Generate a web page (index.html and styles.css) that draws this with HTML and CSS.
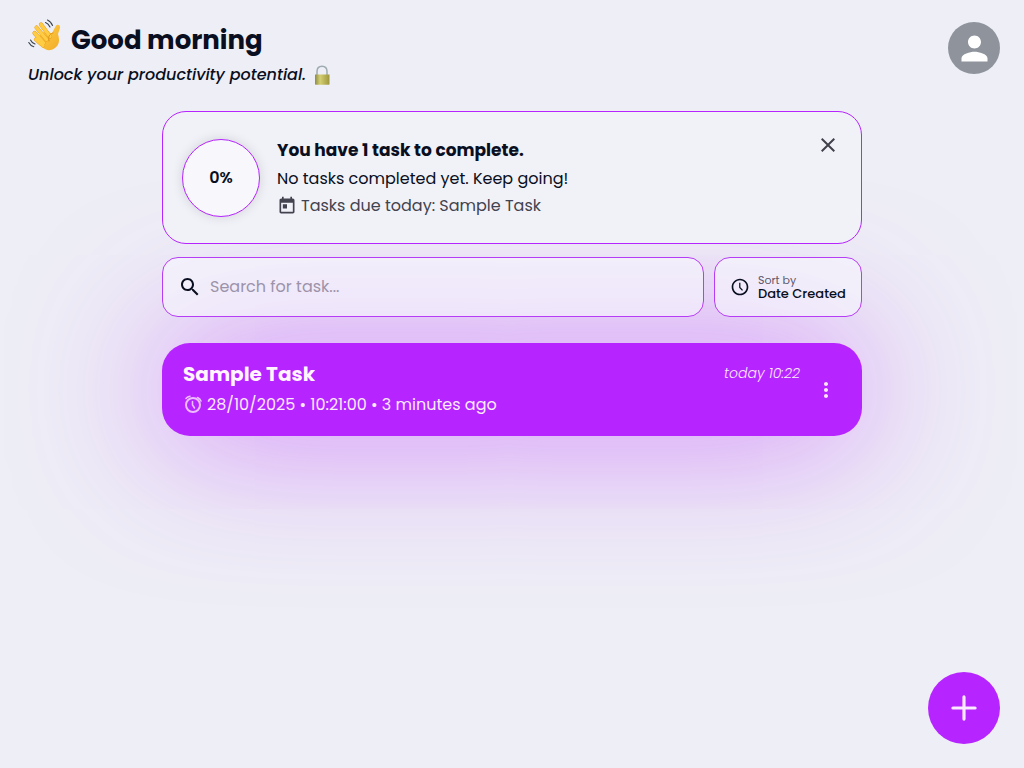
FILE: index.html
```html
<!DOCTYPE html>
<html lang="en">
<head>
<meta charset="utf-8">
<meta name="viewport" content="width=device-width, initial-scale=1">
<title>Todo App</title>
<link rel="stylesheet" href="styles.css">
</head>
<body>
<header class="header">
  <div>
    <h1 class="greeting">
      <svg class="wave" viewBox="0 0 34 34" aria-hidden="true">
        <defs><linearGradient id="skin" x1="0" y1="0" x2="1" y2="1"><stop offset="0" stop-color="#ffd04a"/><stop offset="1" stop-color="#f3ac26"/></linearGradient></defs>
        <path d="M13 14l11 1 3.500-6.500c1.500-3 5-1.500 4.500 1.500l-2 6c2 7 1 11-3 14-5 3.500-9 2.500-13-1l-5-4z" fill="url(#skin)"/>
        <g stroke-linecap="round" fill="none">
          <path d="M13 6.500l9 12M8.500 9.500l10 12M6.500 15l9 10M8 21.500l7 6" stroke="#e79d1c" stroke-width="4.200"/>
          <path d="M13 6.500l9 12M8.500 9.500l10 12M6.500 15l9 10M8 21.500l7 6" stroke="#ffcc43" stroke-width="3.400"/>
          <path d="M25 15c-4 1-5 4-4 8" stroke="#df941b" stroke-width="1"/>
          <path d="M17.500 4.500c2 .8 3.500 2.500 4.500 4.500M19.500 2c2.500 1 4 3 5 5.500M2.500 22c.8 1.800 2.300 3.200 4.500 4M.8 24.500c1 2 2.500 3.500 5 4.200" stroke="#39424b" stroke-width="1.100"/>
        </g>
      </svg>
      <span>Good morning</span>
    </h1>
    <p class="tagline">
      <span>Unlock your productivity potential.</span>
      <svg class="lock" viewBox="0 0 18 20" aria-hidden="true">
        <defs><linearGradient id="brass" x1="0" x2="1"><stop offset="0" stop-color="#8e8b45"/><stop offset=".35" stop-color="#d3cf72"/><stop offset="1" stop-color="#9e963d"/></linearGradient></defs>
        <path d="M4 10V6.500C4 3 6 1.200 9 1.200s5 1.800 5 5.300V10" fill="none" stroke="#9daab0" stroke-width="1.500"/>
        <path d="M2 9.500h14.500V19q0 .8-.8.8H2.800Q2 19.800 2 19z" fill="url(#brass)"/>
      </svg>
    </p>
  </div>
  <button class="avatar" aria-label="Profile">
    <svg viewBox="0 0 24 24"><path d="M12 12c2.210 0 4-1.790 4-4s-1.790-4-4-4-4 1.790-4 4 1.790 4 4 4zm0 2c-2.670 0-8 1.340-8 4v2h16v-2c0-2.660-5.330-4-8-4z"/></svg>
  </button>
</header>

<main class="content">
  <section class="summary">
    <div class="progress">0%</div>
    <div class="summary-text">
      <h2 class="summary-title">You have 1 task to complete.</h2>
      <p class="summary-line">No tasks completed yet. Keep going!</p>
      <p class="due">
        <svg class="icon-20" viewBox="0 0 24 24" aria-hidden="true"><path d="M19 3h-1V1h-2v2H8V1H6v2H5c-1.110 0-1.990.9-1.990 2L3 19c0 1.100.89 2 2 2h14c1.100 0 2-.9 2-2V5c0-1.100-.9-2-2-2zm0 16H5V8h14v11zM7 10h5v5H7z"/></svg>
        <span>Tasks due today: Sample Task</span>
      </p>
    </div>
    <button class="close" aria-label="Close">
      <svg viewBox="0 0 24 24"><path d="M19 6.410 17.590 5 12 10.590 6.410 5 5 6.410 10.590 12 5 17.590 6.410 19 12 13.410 17.590 19 19 17.590 13.410 12z"/></svg>
    </button>
  </section>

  <div class="filters">
    <div class="search">
      <svg class="icon-24" viewBox="0 0 24 24" aria-hidden="true"><path d="M15.500 14h-.79l-.28-.27C15.410 12.590 16 11.110 16 9.500 16 5.910 13.090 3 9.500 3S3 5.910 3 9.500 5.910 16 9.500 16c1.610 0 3.090-.59 4.230-1.570l.27.28v.79l5 4.990L20.490 19l-4.990-5zm-6 0C7.010 14 5 11.990 5 9.500S7.010 5 9.500 5 14 7.010 14 9.500 11.990 14 9.500 14z"/></svg>
      <input class="search-input" type="text" aria-label="Search" placeholder="Search for task...">
    </div>
    <div class="sort">
      <svg class="icon-20" viewBox="0 0 24 24" aria-hidden="true"><path d="M11.990 2C6.470 2 2 6.480 2 12s4.470 10 9.990 10C17.520 22 22 17.520 22 12S17.520 2 11.990 2zM12 20c-4.420 0-8-3.580-8-8s3.580-8 8-8 8 3.580 8 8-3.580 8-8 8zm.5-13H11v6l3.500 3.500 1.100-1-3.100-3.200z"/></svg>
      <div class="sort-field">
        <label class="sort-label" for="sort">Sort by</label>
        <select class="sort-select" id="sort"><option>Date Created</option></select>
      </div>
    </div>
  </div>

  <article class="task">
    <div class="task-body">
      <div class="task-head">
        <h3 class="task-name">Sample Task</h3>
        <time class="task-time">today 10:22</time>
      </div>
      <p class="deadline">
        <svg class="icon-20 alarm" viewBox="0 0 20 20" aria-hidden="true"><g fill="none" stroke="currentColor" stroke-width="2" stroke-linecap="round"><circle cx="10" cy="10" r="7"/><path d="M9.500 6.500V10l2 3" stroke-width="1.600"/><path d="M3 3.500Q4.500 1.500 7 1.200M14.500 2.500Q17 3.500 18 6" stroke-width="1.600"/></g></svg>
        <span>28/10/2025 • 10:21:00 • 3 minutes ago</span>
      </p>
    </div>
    <button class="more" aria-label="Task menu">
      <svg viewBox="0 0 24 24"><path d="M12 8c1.100 0 2-.9 2-2s-.9-2-2-2-2 .9-2 2 .9 2 2 2zm0 2c-1.100 0-2 .9-2 2s.9 2 2 2 2-.9 2-2-.9-2-2-2zm0 6c-1.100 0-2 .9-2 2s.9 2 2 2 2-.9 2-2-.9-2-2-2z"/></svg>
    </button>
  </article>
</main>

<button class="add" aria-label="Add task">
  <svg viewBox="0 0 24 24"><path d="M5 12h14M12 5v14"/></svg>
</button>
</body>
</html>
```
FILE: styles.css
```css
* { box-sizing: border-box; }

body {
  margin: 0;
  min-height: 100vh;
  overflow-x: hidden;
  background: #eeeef6;
  color: #090f20;
  font-family: Poppins, Inter, "Noto Sans", sans-serif;
  font-size: 16px;
  line-height: 24px;
}

h1, h2, h3, p { margin: 0; }
button { padding: 0; border: 0; background: none; cursor: pointer; }
svg { display: block; fill: currentColor; flex: none; }
.icon-20 { width: 20px; height: 20px; }
.icon-24 { width: 24px; height: 24px; }

.header {
  display: flex;
  justify-content: space-between;
  align-items: flex-start;
  padding: 18px 24px 0 28px;
}

.greeting {
  display: flex;
  gap: 9px;
  font-size: 26px;
  line-height: 45px;
  font-weight: 700;
}
.wave { width: 34px; height: 34px; }

.tagline {
  display: flex;
  align-items: center;
  gap: 7px;
  font-style: italic;
  font-weight: 500;
}
.lock { width: 18px; height: 20px; }

.avatar {
  display: grid;
  place-items: center;
  width: 52px;
  height: 52px;
  margin-top: 4px;
  border-radius: 50%;
  background: #8e939c;
  color: #fff;
}
.avatar svg { width: 39px; height: 39px; }

.content {
  width: 100%;
  max-width: 732px;
  margin: 0 auto;
  padding: 24px 16px;
}

.summary, .filters { position: relative; z-index: 1; }

.summary {
  display: flex;
  align-items: center;
  gap: 17px;
  padding: 24px 19px;
  border: 1px solid #b624ff;
  border-radius: 24px;
  background: #f1f1f8;
}
.progress {
  display: grid;
  place-items: center;
  flex: none;
  width: 78px;
  height: 78px;
  border: 1px solid #b624ff;
  border-radius: 50%;
  background: #f7f7fc;
  box-shadow: 0 0 12px rgba(0, 0, 0, .13);
  font-weight: 600;
}
.summary-text { flex: 1; }
.summary-title { font-size: 17px; line-height: 28px; font-weight: 700; }
.summary-line { line-height: 29px; }
.due {
  display: flex;
  align-items: center;
  gap: 4px;
  line-height: 26px;
  color: #42434e;
}
.close {
  align-self: flex-start;
  width: 24px;
  height: 24px;
  margin: -3px 2px 0 0;
  color: #40414a;
}

.filters { display: flex; gap: 10px; margin-top: 13px; }
.search, .sort {
  display: flex;
  align-items: center;
  height: 60px;
  border: 1px solid #b73cf5;
  border-radius: 16px;
  background: rgba(246, 246, 253, .6);
}
.search { flex: 1; gap: 8px; padding: 0 15px; }
.search-input {
  flex: 1;
  min-width: 0;
  border: 0;
  padding: 0;
  outline: 0;
  background: none;
  color: inherit;
  font: inherit;
}
.search-input::placeholder { color: #9c93aa; opacity: 1; }
.sort { width: 148px; gap: 8px; padding: 0 12px 0 15px; }
.sort-field { flex: 1; display: grid; }
.sort-label { font-size: 11px; line-height: 13px; color: #5d586b; }
.sort-select {
  appearance: none;
  width: 100%;
  padding: 0;
  border: 0;
  background: none;
  color: inherit;
  font: inherit;
  font-size: 13px;
  line-height: 14px;
  font-weight: 500;
}

.task {
  display: flex;
  align-items: center;
  gap: 14px;
  margin-top: 26px;
  padding: 16px 24px 16px 21px;
  border-radius: 28px;
  background: #b624ff;
  color: #faeaff;
  box-shadow: 0 0 144px rgba(182, 36, 255, .58);
}
.task-body { flex: 1; }
.task-head { display: flex; justify-content: space-between; }
.task-name { font-size: 20px; line-height: 30px; font-weight: 700; color: #fff4ff; }
.task-time { font-size: 14px; line-height: 28px; font-style: italic; font-weight: 300; }
.deadline { display: flex; align-items: center; gap: 4px; line-height: 31px; }
.alarm { color: #ecbcff; }
.more { width: 24px; height: 24px; color: #fbe4ff; }

.add {
  position: fixed;
  right: 24px;
  bottom: 24px;
  display: grid;
  place-items: center;
  width: 72px;
  height: 72px;
  border-radius: 50%;
  background: #b624ff;
  color: #faeaff;
}
.add svg { width: 38px; height: 38px; stroke: currentColor; stroke-width: 2; stroke-linecap: round; }
```
